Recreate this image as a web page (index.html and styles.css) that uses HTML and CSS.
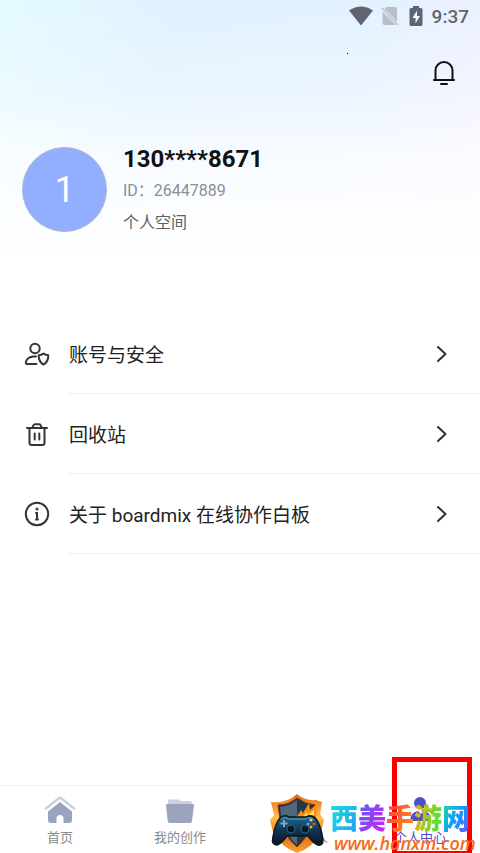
FILE: index.html
```html
<!DOCTYPE html>
<html lang="zh-CN">
<head>
<meta charset="utf-8">
<meta name="viewport" content="width=device-width, initial-scale=1">
<title>个人中心</title>
<link rel="stylesheet" href="styles.css">
</head>
<body>
<div class="app">
  <header class="status">
    <svg width="24" height="20" viewBox="0 0 24 20" fill="#5f6470"><path d="M0 4.500Q12-3.500 24 4.500L12 19.500z"/></svg>
    <svg class="sim" width="18" height="20" viewBox="0 0 18 20"><path d="M6 1h8q2 0 2 2v12.500L3.500 2.500zM1.500 5.500L15 19H3.500q-2 0-2-2z" fill="#b9bec9"/><path d="M1 2l16 17" stroke="#b9bec9" stroke-width="1.500"/></svg>
    <svg class="battery" width="14" height="20" viewBox="0 0 14 20"><path d="M4 0h6v2h2q1.500 0 1.500 1.500v15Q13.500 20 12 20H2Q.5 20 .5 18.500v-15Q.5 2 2 2h2z" fill="#5f6470"/><path d="M8 4.500L3.500 12h3v5.500L11 10H8z" fill="#f4f5ff"/></svg>
    <time class="clock">9:37</time>
  </header>
  <div class="toolbar">
    <span class="speck"></span>
    <button class="bell" type="button" aria-label="通知">
      <svg width="24" height="26" viewBox="0 0 24 26" fill="none" stroke="#111" stroke-width="2" stroke-linecap="round"><path d="M3.500 19.500V10.500a8.500 8.500 0 0 1 17 0v9M2 20h20M9 24h6"/></svg>
    </button>
  </div>
  <section class="profile">
    <div class="avatar">1</div>
    <div class="details">
      <h1>130****8671</h1>
      <p class="uid">ID：26447889</p>
      <p class="space">个人空间</p>
    </div>
  </section>
  <main class="menu">
    <a class="row" href="#account">
      <svg class="icon" width="26" height="26" viewBox="0 0 26 26" fill="none" stroke="#353535" stroke-width="2" stroke-linecap="round" stroke-linejoin="round"><circle cx="11" cy="7.500" r="4.700"/><path d="M12 15.500H9.500Q3.500 16 2 20.500q-.6 2.500 1 2.500h9.500M19.500 12.500q2 1.700 4.800 1.700 0 6.800-4.800 9.300-4.800-2.500-4.800-9.300 2.800 0 4.800-1.700z"/></svg>
      <span class="label">账号与安全<svg class="chevron" width="12" height="18" viewBox="0 0 12 18"><path d="M2 2l7.500 7L2 16"/></svg></span>
    </a>
    <a class="row" href="#trash">
      <svg class="icon" width="26" height="26" viewBox="0 0 26 26" fill="none" stroke="#353535" stroke-width="2" stroke-linecap="round" stroke-linejoin="round"><path d="M3 7h20M5.500 7v15q0 2 2 2h11q2 0 2-2V7M8.500 6.500l1-2.300q.4-.9 1.500-.9h4q1.100 0 1.500.9l1 2.300M10.700 12.500v6M15.300 12.500v6"/></svg>
      <span class="label">回收站<svg class="chevron" width="12" height="18" viewBox="0 0 12 18"><path d="M2 2l7.500 7L2 16"/></svg></span>
    </a>
    <a class="row" href="#about">
      <svg class="icon" width="26" height="26" viewBox="0 0 26 26" fill="none" stroke="#353535" stroke-width="2" stroke-linecap="round"><circle cx="13" cy="13" r="11.200"/><path d="M12 12h1v6.500M12 18.500h2"/><circle cx="13" cy="8" r=".6"/></svg>
      <span class="label">关于 boardmix 在线协作白板<svg class="chevron" width="12" height="18" viewBox="0 0 12 18"><path d="M2 2l7.500 7L2 16"/></svg></span>
    </a>
  </main>
  <nav class="tabs">
    <a class="tab" href="#home">
      <svg width="32" height="28" viewBox="0 0 32 28"><path d="M2 12.500L14.500 2.500q1.500-1.200 3 0L30 12.500" fill="none" stroke="#cdd1df" stroke-width="2.500" stroke-linecap="round"/><path d="M16 6l12 9.500V24q0 3-3 3h-5.500v-4.500a3.500 3.500 0 0 0-7 0V27H7q-3 0-3-3v-8.500z" fill="#9ba4bf"/></svg>
      <span>首页</span>
    </a>
    <a class="tab" href="#works">
      <svg width="32" height="28" viewBox="0 0 32 28"><path d="M4 8V5q0-1.500 1.500-1.500h9L17 5h9q2 0 2 3z" fill="#cdd1df"/><path d="M3 8h26q1 0 1 1.500L28 25q-.3 2-2 2H6q-2 0-2.300-2L2 9.500Q2 8 3 8z" fill="#9ba4bf"/></svg>
      <span>我的创作</span>
    </a>
    <a class="tab" href="#contacts"><span class="clipped">人</span></a>
    <a class="tab active" href="#me">
      <svg width="32" height="28" viewBox="0 0 32 28" fill="#4d50cb"><circle cx="16" cy="7" r="6"/><path d="M6 24q1-8 8-9l3 3 3-3q6 1 7 8 0 2-2 2H8q-2 0-2-1z"/></svg>
      <span>个人中心</span>
    </a>
    <div class="highlight"></div>
    <div class="watermark">
      <svg width="56" height="60" viewBox="0 0 56 60">
        <defs>
          <linearGradient id="flame" x2="0" y2="1"><stop stop-color="#e66a18"/><stop offset=".4" stop-color="#ffc247"/><stop offset=".7" stop-color="#e96a16"/><stop offset="1" stop-color="#f7a632"/></linearGradient>
          <linearGradient id="pad" x2="0" y2="1"><stop stop-color="#246a93"/><stop offset=".5" stop-color="#12354f"/><stop offset="1" stop-color="#071722"/></linearGradient>
        </defs>
        <path d="M28 1Q36 8 47 7l6 2-2 12 4 6-3 12Q44 55 28 60 12 54 4 39L1 27l4-5L2 9q15 2 26-8z" fill="url(#flame)"/>
        <path d="M28 5q8 6 18 7-2 28-18 42Q11 40 9 12q11 0 19-7z" fill="#24384a" stroke="#7b3213"/>
        <path d="M28 7v45Q13 39 11 14q10-1 17-7z" fill="#526779"/>
        <path d="M27 25l5-8 2 3 6-10 1 7 7-6-1 15H27z" fill="#ff8b17"/><path d="M33 25l5-6 1 3 6-5v9z" fill="#ffe060"/>
        <path d="M11 25q4-4 9-1h17q6-3 10 2 5 7 7 21 0 6-5 5-4-1-10-9H18q-6 8-10 9-6 0-4-8 2-13 7-19z" fill="url(#pad)" stroke="#091823" stroke-width="1.500"/>
        <path d="M12 26q4-3 8 0h16q6-3 9 1" fill="none" stroke="#50a6cc"/>
        <g fill="#081722" stroke="#28678a"><circle cx="22" cy="36" r="4"/><circle cx="36" cy="36" r="4"/></g>
        <path d="M15 27v7M11.500 30.500h7" stroke="#7ca8bf" stroke-width="2"/>
        <circle cx="42" cy="27" r="1.500" fill="#f5ce3b"/><circle cx="39" cy="31" r="1.500" fill="#38bce7"/><circle cx="45" cy="31" r="1.500" fill="#f04940"/><circle cx="42" cy="34" r="1.500" fill="#f5ad35"/>
      </svg>
      <div class="brand">
        <strong><span class="c1">西</span><span class="c2">美</span><span class="c3">手</span><span class="c4">游</span><span class="c5">网</span></strong>
        <em>www.hanxm.com</em>
      </div>
    </div>
  </nav>
</div>
</body>
</html>
```
FILE: styles.css
```css
* { box-sizing: border-box; }
body {
  margin: 0;
  font-family: Roboto, "Noto Sans CJK SC", sans-serif;
  color: #222;
  background: #fff;
}
h1, p { margin: 0; }
a { color: inherit; text-decoration: none; }
svg { display: block; flex: none; }

.app {
  min-height: 100vh;
  display: flex;
  flex-direction: column;
  background:
    linear-gradient(to bottom, rgba(255,255,255,0) 0, rgba(255,255,255,.3) 90px, rgba(255,255,255,.75) 160px, #fff 260px),
    linear-gradient(105deg, #e4fbff 0, #e0f1ff 25%, #e4f1ff 55%, #f3f0ff 78%, #f7effe 100%);
}
.status {
  height: 32px;
  padding: 0 11px;
  display: flex;
  align-items: center;
  justify-content: flex-end;
}
.sim { margin-left: 8px; }
.battery { margin-left: 10px; }
.clock {
  margin-left: 9px;
  font-size: 19px;
  font-weight: 500;
  color: #5f6470;
}
.toolbar {
  height: 81px;
  padding: 20px 24px;
  display: flex;
  align-items: flex-start;
  justify-content: flex-end;
}
.speck { width: 1px; height: 1px; margin: 1px 84px 0 0; background: #000; }
.bell { padding: 8px 0 0; border: 0; background: none; }

.profile {
  padding: 30px 22px 0;
  display: flex;
  gap: 16px;
}
.avatar {
  width: 85px;
  height: 85px;
  margin-top: 4px;
  display: flex;
  align-items: center;
  justify-content: center;
  flex: none;
  border: 1px solid #afb5cf;
  border-radius: 50%;
  background: #91aeff;
  color: #fff;
  font-size: 36px;
}
h1 { font-size: 24px; line-height: 32px; font-weight: 700; color: #111; }
.uid, .space { font-size: 16px; line-height: 32px; }
.uid { color: #8b8e93; }
.space { color: #5c5f63; }

.menu { padding-top: 75px; flex: 1; }
.row { display: flex; align-items: center; padding-left: 24px; }
.icon { margin-right: 18px; }
.label {
  flex: 1;
  height: 80px;
  padding: 0 32px 0 1px;
  display: flex;
  align-items: center;
  justify-content: space-between;
  border-bottom: 1px solid #efefef;
  font-size: 19px;
}
.chevron { fill: none; stroke: #333; stroke-width: 2; stroke-linecap: round; stroke-linejoin: round; }

.tabs {
  position: relative;
  height: 68px;
  padding-top: 9px;
  display: grid;
  grid-template-columns: repeat(4, 1fr);
  border-top: 1px solid #eee;
}
.tab {
  display: flex;
  flex-direction: column;
  align-items: center;
  justify-content: flex-end;
  padding-bottom: 5px;
  color: #8a8a8a;
  font-size: 13px;
  line-height: 20px;
}
.tab svg { margin-bottom: 4px; }
.clipped { width: 56px; text-align: right; }
.active { color: #4d50cb; }
.highlight {
  position: absolute;
  right: 8px;
  bottom: 0;
  width: 80px;
  height: 96px;
  border: 5px solid #f80000;
  border-bottom-width: 2px;
}
.watermark {
  position: absolute;
  right: 6px;
  bottom: 0;
  display: flex;
  align-items: flex-end;
  gap: 5px;
}
.brand { width: 144px; }
.brand strong {
  display: flex;
  font: 900 28px/32px "Noto Sans CJK SC", sans-serif;
}
.brand strong span { color: transparent; background-clip: text; -webkit-background-clip: text; }
.brand .c1 { background-image: linear-gradient(120deg, #12e6e0, #269cf5); }
.brand .c2 { background-image: linear-gradient(120deg, #5264f5, #d51cf0); }
.brand .c3 { background-image: linear-gradient(120deg, #ff3548, #ff9a10); }
.brand .c4 { background-image: linear-gradient(100deg, #ffab00, #38e849); }
.brand .c5 { background-image: linear-gradient(120deg, #20df9b, #1298ff 55%, #7054f5); }
.brand em {
  display: block;
  padding-left: 4px;
  font: italic 600 18px/20px "Noto Sans", "Open Sans", sans-serif;
  font-family: "Open Sans", sans-serif;
  color: #f86a18;
}
```
